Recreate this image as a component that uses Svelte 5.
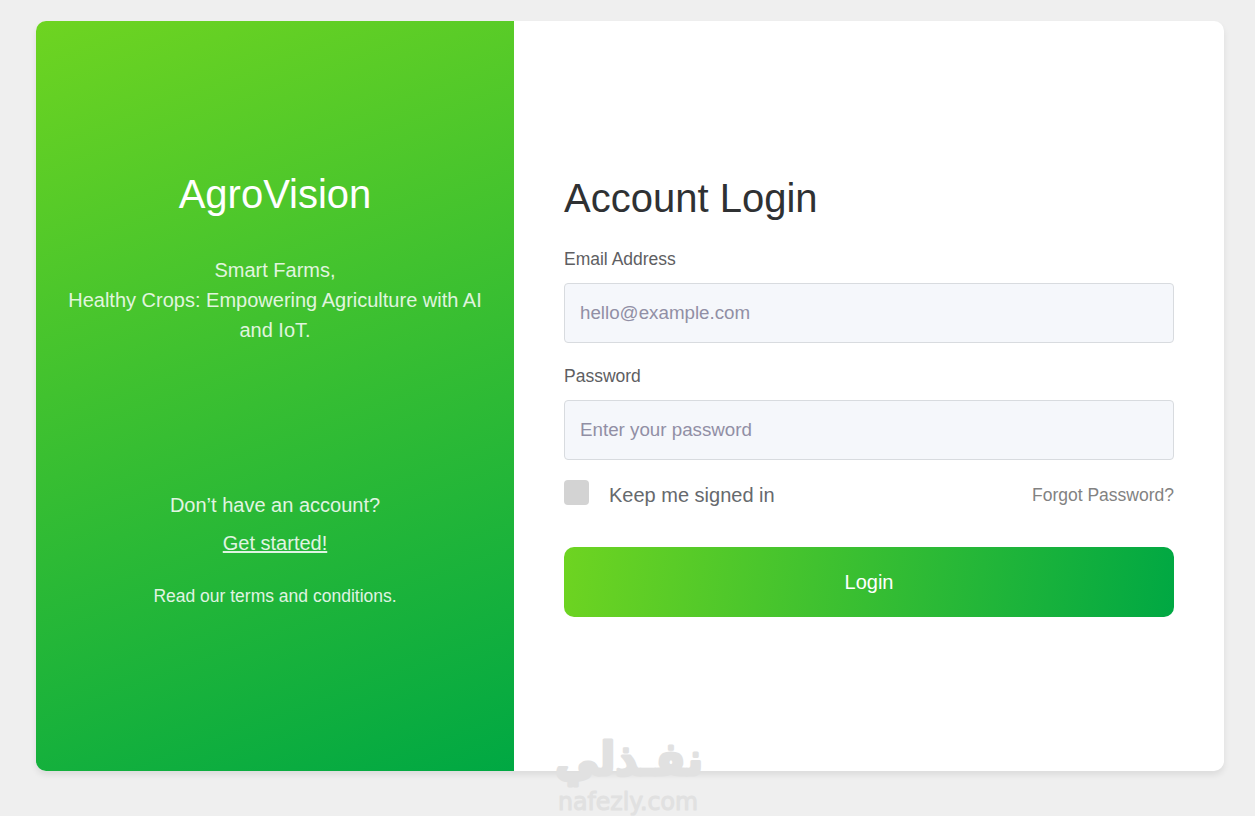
<script lang="ts">
  let email = $state('')
  let password = $state('')
  let keepSignedIn = $state(false)

  const handleSubmit = (e: SubmitEvent) => {
    e.preventDefault()
  }
</script>

<main class="page">
  <div class="card">
    <aside class="intro">
      <h1>AgroVision</h1>
      <p class="tagline">Smart Farms,<br />Healthy Crops: Empowering Agriculture with AI and IoT.</p>
      <p class="register">Don’t have an account?<br /><a href="#register">Get started!</a></p>
      <p class="terms">Read our <a href="#terms">terms</a> and <a href="#conditions">conditions.</a></p>
    </aside>

    <section class="login">
      <h2>Account Login</h2>
      <form onsubmit={handleSubmit}>
        <div class="input-group">
          <label for="email">Email Address</label>
          <input id="email" type="email" bind:value={email} placeholder="hello@example.com" />
        </div>
        <div class="input-group">
          <label for="password">Password</label>
          <input id="password" type="password" bind:value={password} placeholder="Enter your password" />
        </div>
        <div class="options">
          <label class="remember">
            <input type="checkbox" bind:checked={keepSignedIn} />
            <span>Keep me signed in</span>
          </label>
          <a href="#forgot">Forgot Password?</a>
        </div>
        <button type="submit">Login</button>
      </form>
    </section>
  </div>

  <svg class="watermark" width="160" height="84" viewBox="0 0 160 84" aria-hidden="true">
    <text class="arabic" x="5" y="43" textLength="148" lengthAdjust="spacingAndGlyphs">نفـذلي</text>
    <text class="domain" x="8" y="78" textLength="140" lengthAdjust="spacingAndGlyphs">nafezly.com</text>
  </svg>
</main>

<style>
  :global(body) {
    background: #efefef;
  }

  .page {
    position: relative;
    box-sizing: border-box;
    height: 816px;
    padding: 21px 31px 45px 36px;
    overflow: hidden;
    font-family: 'Liberation Sans', Arial, sans-serif;
    font-size: 20px;
    line-height: 30px;
  }

  .card {
    display: flex;
    height: 750px;
    border-radius: 10px;
    overflow: hidden;
    background: #fff;
    box-shadow: 0 4px 6px rgba(0, 0, 0, 0.08);
  }

  h1,
  h2,
  p {
    margin: 0;
    font-weight: 400;
  }

  .intro {
    box-sizing: border-box;
    flex: 0 0 478px;
    padding: 149px 30px 0;
    text-align: center;
    color: #fff;
    background: linear-gradient(160deg, #6ed421, #00a843);
  }

  h1 {
    font-size: 40px;
    line-height: 48px;
  }

  .tagline {
    margin-top: 37px;
    opacity: 0.84;
  }

  .register {
    margin-top: 141px;
    line-height: 38px;
    opacity: 0.86;
  }

  .intro a {
    color: inherit;
  }

  .terms {
    margin-top: 19px;
    font-size: 17.5px;
    opacity: 0.86;
  }

  .terms a {
    text-decoration: none;
  }

  .login {
    flex: 1;
    padding: 153px 50px 0;
  }

  h2 {
    font-size: 40px;
    line-height: 48px;
    color: #2f3133;
  }

  .input-group {
    display: flex;
    flex-direction: column;
    gap: 10px;
    margin-bottom: 20px;
  }

  form {
    padding-top: 24px;
  }

  .input-group label {
    font-size: 17.5px;
    line-height: 27px;
    color: #5e5e62;
  }

  .input-group input {
    box-sizing: border-box;
    width: 100%;
    height: 60px;
    padding: 0 15px;
    border: 1px solid #d8dbdf;
    border-radius: 4px;
    background: #f5f7fb;
    font-family: inherit;
    font-size: 18.75px;
  }

  .input-group input::placeholder {
    color: #918fa5;
    opacity: 1;
  }

  .options {
    display: flex;
    justify-content: space-between;
    align-items: center;
    height: 30px;
  }

  .remember {
    display: flex;
    align-items: center;
    gap: 20px;
    color: #66696d;
  }

  .remember input {
    appearance: none;
    width: 25px;
    height: 25px;
    margin: 0 0 5px;
    border-radius: 4px;
    background: #d3d3d3;
  }

  .remember input:checked {
    background: #37bd33;
  }

  .options a {
    font-size: 17.5px;
    color: #828282;
    text-decoration: none;
  }

  button {
    display: block;
    width: 100%;
    height: 70px;
    margin-top: 37px;
    border: 0;
    border-radius: 10px;
    background: linear-gradient(98deg, #6ed421, #00a843);
    color: #fff;
    font: inherit;
    cursor: pointer;
  }

  .watermark {
    position: absolute;
    left: 550px;
    top: 732px;
    fill: #e1e1e1;
    stroke: #e1e1e1;
    stroke-linejoin: round;
    pointer-events: none;
  }

  .arabic {
    font: 700 46px 'DejaVu Sans', sans-serif;
    stroke-width: 3px;
  }

  .domain {
    font: 400 24px 'DejaVu Sans', sans-serif;
    stroke-width: 1px;
  }
</style>
